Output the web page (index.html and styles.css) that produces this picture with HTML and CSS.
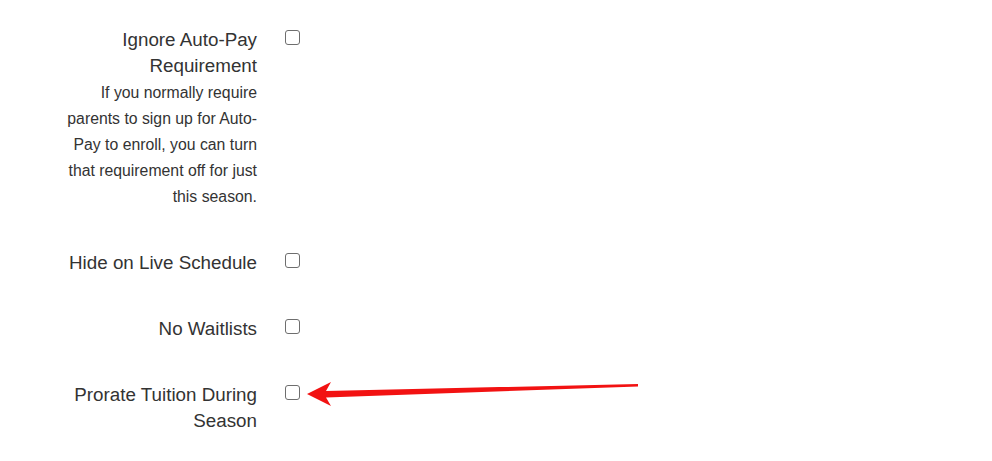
FILE: index.html
```html
<!DOCTYPE html>
<html lang="en">
<head>
  <meta charset="UTF-8">
  <title>Season Options</title>
  <link rel="stylesheet" href="styles.css">
</head>
<body>
  <form class="options">
    <div class="option">
      <label class="option-label" for="ignoreAutopay">
        <span class="option-title">Ignore Auto-Pay Requirement</span>
        <span class="option-help">If you normally require parents to sign up for Auto-Pay to enroll, you can turn that requirement off for just this season.</span>
      </label>
      <input type="checkbox" id="ignoreAutopay" class="option-check">
    </div>

    <div class="option">
      <label class="option-label" for="hideSchedule">
        <span class="option-title">Hide on Live Schedule</span>
      </label>
      <input type="checkbox" id="hideSchedule" class="option-check">
    </div>

    <div class="option">
      <label class="option-label" for="noWaitlists">
        <span class="option-title">No Waitlists</span>
      </label>
      <input type="checkbox" id="noWaitlists" class="option-check">
    </div>

    <div class="option">
      <label class="option-label" for="prorate">
        <span class="option-title">Prorate Tuition During Season</span>
      </label>
      <input type="checkbox" id="prorate" class="option-check">
    </div>
  </form>

  <!-- annotation arrow pointing at the prorate checkbox -->
  <svg class="callout" width="992" height="461" viewBox="0 0 992 461">
    <polygon fill="#f21212" points="307,394 331,382 326,391 638,384 638,386.5 326,397.5 331,406"/>
  </svg>
</body>
</html>
```

FILE: styles.css
```css
body {
  margin: 0;
  background: #fff;
  font-family: "Liberation Sans", Arial, sans-serif;
  color: #333;
}
.options {
  display: flex;
  flex-direction: column;
  gap: 40px;
  padding: 27px 0 0 60px;
}
.option {
  display: flex;
  align-items: flex-start;
  gap: 28px;
}
.option-label {
  width: 197px;
  text-align: right;
  display: flex;
  flex-direction: column;
}
.option-title {
  font-size: 18.8px;
  line-height: 26px;
}
.option-help {
  font-size: 15.8px;
  line-height: 26px;
  margin-top: 1px;
}
.option-check {
  appearance: none;
  -webkit-appearance: none;
  margin: 3px 0 0;
  width: 15px;
  height: 15px;
  border: 1.5px solid #6e6e6e;
  border-radius: 3px;
  background: #fff;
}
.callout {
  position: absolute;
  top: 0;
  left: 0;
  pointer-events: none;
}
```
